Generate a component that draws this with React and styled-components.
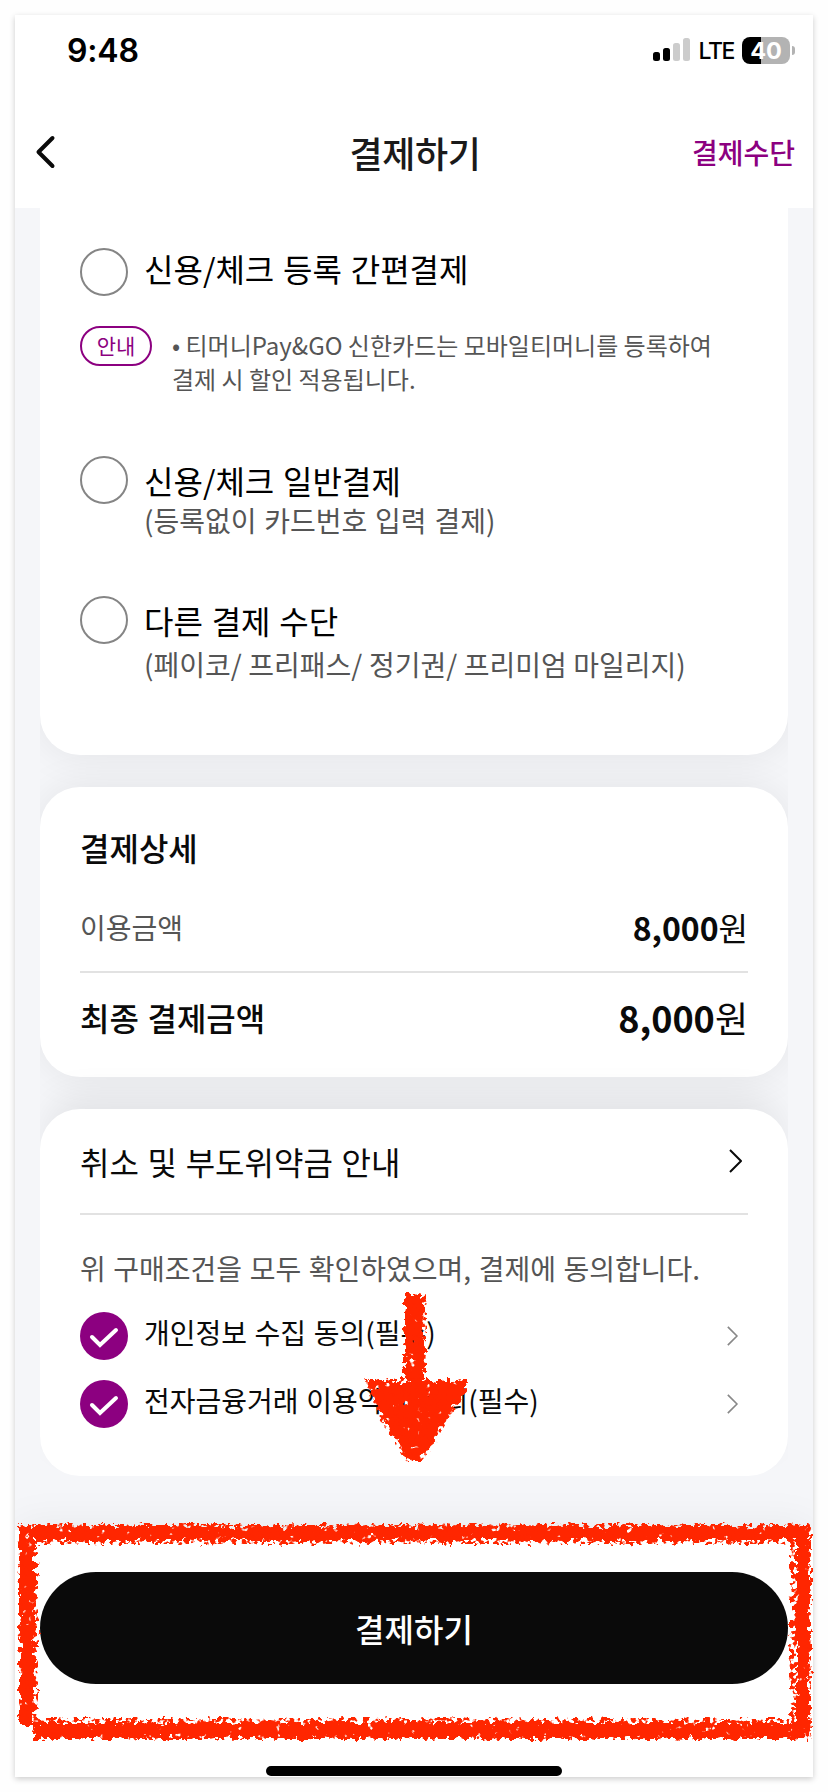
import React from 'react';
import styled, { createGlobalStyle } from 'styled-components';

const GlobalStyle = createGlobalStyle`
  * {
    box-sizing: border-box;
  }

  body {
    margin: 0;
    background: #fefefe;
    font-family: 'Noto Sans CJK KR', 'Noto Sans', sans-serif;
    color: #0a0a0a;
  }
`;

const Page = styled.div`
  position: relative;
  width: 828px;
  height: 1792px;
  padding: 15px;
  overflow: hidden;
`;

const Screen = styled.div`
  display: flex;
  flex-direction: column;
  width: 798px;
  height: 1762px;
  background: #fff;
  box-shadow: 0 2px 6px rgba(0, 0, 0, 0.2);
`;

const StatusBar = styled.div`
  display: flex;
  align-items: center;
  justify-content: space-between;
  height: 70px;
  padding: 0 18px 0 52px;
  color: #000;
  font-family: Inter, sans-serif;
`;

const Time = styled.span`
  font-size: 32px;
  font-weight: 600;
  letter-spacing: -0.2px;
`;

const StatusRight = styled.div`
  display: flex;
  align-items: center;
`;

const Network = styled.span`
  margin: 2px 8px 0 8px;
  font-size: 23px;
  font-weight: 500;
  letter-spacing: -1.4px;
`;

const Battery = styled.div`
  width: 48px;
  height: 27px;
  border-radius: 8px;
  background: linear-gradient(90deg, #000 40%, #b3b3b3 40%);
  color: #fff;
  font-size: 23.5px;
  font-weight: 700;
  line-height: 27px;
  text-align: center;
`;

const BatteryTip = styled.div`
  width: 3px;
  height: 9px;
  margin-left: 2px;
  border-radius: 0 4px 4px 0;
  background: #b3b3b3;
`;

const Header = styled.header`
  display: grid;
  grid-template-columns: 1fr auto 1fr;
  align-items: center;
  height: 123px;
  padding: 11px 18px 0 20px;
`;

const Title = styled.h1`
  margin: 0;
  font-size: 36px;
  font-weight: 500;
  line-height: 52px;
  letter-spacing: -0.4px;
  color: #1a1a1a;
`;

const HeaderLink = styled.span`
  justify-self: end;
  font-size: 28px;
  font-weight: 500;
  line-height: 40px;
  color: #8c0080;
`;

const Body = styled.main`
  height: 1322px;
  padding: 0 25px;
  background: #f5f6f9;
`;

const CardList = styled.div`
  display: flex;
  flex-direction: column;
  gap: 32px;
  height: 1268px;
  overflow: hidden;
`;

// the last card only throws its shadow upwards
const Card = styled.section`
  flex: none;
  height: ${(props) => props.$height}px;
  padding: ${(props) => props.$top}px 40px 0;
  border-radius: ${(props) => (props.$cut ? '0 0 40px 40px' : '40px')};
  background: #fff;
  box-shadow: ${(props) => (props.$last ? '0 -20px 36px -8px' : '0 0 40px')} rgba(10, 14, 0, 0.08);
`;

const Option = styled.div`
  display: flex;
  align-items: flex-start;
  gap: 16px;
  height: ${(props) => props.$height}px;
`;

const Radio = styled.span`
  flex: none;
  width: 48px;
  height: 48px;
  border: 2px solid #858585;
  border-radius: 50%;
`;

const OptionText = styled.div`
  padding-top: ${(props) => props.$top}px;
`;

const OptionName = styled.div`
  font-size: 32px;
  line-height: 40px;
  word-spacing: 1.6px;
  color: #000;
`;

const OptionSub = styled.div`
  margin-top: ${(props) => props.$gap}px;
  font-size: 28px;
  line-height: 40px;
  word-spacing: ${(props) => props.$space}px;
  color: #555;
`;

const Notice = styled.div`
  display: flex;
  align-items: flex-start;
  gap: 20px;
  height: 130px;
`;

const NoticeTag = styled.span`
  width: 72px;
  height: 40px;
  border: 2px solid #8c0080;
  border-radius: 20px;
  font-size: 21px;
  line-height: 35px;
  text-align: center;
  color: #8c0080;
`;

const NoticeText = styled.p`
  margin: 2px 0 0;
  font-size: 24px;
  line-height: 34px;
  white-space: nowrap;
  color: #555;
`;

const CardTitle = styled.h2`
  margin: 0;
  font-size: 32px;
  font-weight: 500;
  line-height: 46px;
`;

const PriceRow = styled.div`
  display: flex;
  align-items: center;
  justify-content: space-between;
  height: ${(props) => props.$height}px;
  padding-top: ${(props) => props.$top || 0}px;
`;

const PriceLabel = styled.span`
  font-size: ${(props) => (props.$total ? 32 : 28)}px;
  font-weight: ${(props) => (props.$total ? 500 : 400)};
  line-height: 46px;
  word-spacing: 1.4px;
  color: ${(props) => (props.$total ? '#0a0a0a' : '#555')};
`;

const Price = styled.span`
  font-size: ${(props) => (props.$total ? 36 : 32)}px;
  line-height: 46px;

  b {
    font-weight: 700;
  }
`;

const Divider = styled.div`
  height: 2px;
  background: #e2e2e2;
`;

const LinkRow = styled.div`
  display: flex;
  align-items: center;
  justify-content: space-between;
  height: 104px;
  padding-right: 6px;
  font-size: 32px;
  word-spacing: 1.5px;
`;

const Agreement = styled.p`
  margin: 32px 0 23px;
  font-size: 28px;
  line-height: 42px;
  word-spacing: 1.3px;
  color: #555;
`;

const CheckRow = styled.div`
  display: flex;
  align-items: center;
  height: 48px;
  margin-bottom: 20px;
  padding-right: 10px;
`;

const CheckLabel = styled.span`
  flex: 1;
  padding-left: 16px;
  font-size: 28px;
  line-height: 40px;
  margin-top: -9px;
  word-spacing: 1.3px;
`;

const Sheet = styled.footer`
  position: relative;
  display: flex;
  flex-direction: column;
  align-items: center;
  height: 247px;
  padding: 42px 25px 0;
  background: #fff;
  box-shadow: 0 -6px 40px rgba(0, 0, 0, 0.06);
  clip-path: inset(-60px 0 0 0);
`;

const PayButton = styled.button`
  width: 748px;
  height: 112px;
  padding: 0 0 1px;
  border: 0;
  border-radius: 56px;
  background: #0a0a0a;
  color: #fff;
  font-family: inherit;
  font-size: 32px;
  font-weight: 500;
`;

const HomeIndicator = styled.div`
  width: 296px;
  height: 10px;
  margin-top: 82px;
  border-radius: 5px;
  background: #000;
`;

const Marker = styled.svg`
  position: absolute;
  top: 0;
  left: 0;
  pointer-events: none;
`;

const Signal = () => (
  <svg width="37" height="24" viewBox="0 0 37 24">
    <rect x="0" y="14" width="7" height="9" rx="2.5" />
    <rect x="10" y="10" width="7" height="13" rx="2.5" />
    <rect x="20" y="5" width="7" height="18" rx="2.5" fill="#ccc" />
    <rect x="30" y="0" width="7" height="23" rx="2.5" fill="#ccc" />
  </svg>
);

const BackIcon = () => (
  <svg width="22" height="34" viewBox="0 0 22 34" fill="none" stroke="#0a0a0a" strokeWidth="4">
    <path d="M17.5 3 3.5 17 17.5 31" strokeLinejoin="round" strokeLinecap="round" />
  </svg>
);

const Chevron = ({ size, color }) => (
  <svg width={size * 0.55} height={size} viewBox="0 0 13.2 24" fill="none" stroke={color} strokeWidth="2">
    <path d="M1 1 12 12 1 23" strokeLinejoin="round" />
  </svg>
);

const CheckIcon = () => (
  <svg width="48" height="48" viewBox="0 0 48 48">
    <circle cx="24" cy="24" r="24" fill="#8c0080" />
    <path d="M12 25 20 33 36 18" fill="none" stroke="#fff" strokeWidth="4" strokeLinecap="round" />
  </svg>
);

// hand drawn crayon marks: a solid core plus a grainy edge
const Crayon = () => (
  <Marker width="828" height="1792" viewBox="0 0 828 1792">
    <defs>
      <filter id="core" filterUnits="userSpaceOnUse" x="0" y="1270" width="828" height="500" colorInterpolationFilters="sRGB">
        <feTurbulence type="fractalNoise" baseFrequency="0.16" numOctaves="2" seed="4" result="n" />
        <feDisplacementMap in="SourceGraphic" in2="n" scale="12" xChannelSelector="R" yChannelSelector="G" result="d" />
        <feTurbulence type="fractalNoise" baseFrequency="0.12" numOctaves="2" seed="11" />
        <feColorMatrix values="0 0 0 0 0  0 0 0 0 0  0 0 0 0 0  12 0 0 0 -2.8" result="holes" />
        <feComposite in="d" in2="holes" operator="in" />
      </filter>
      <filter id="grain" filterUnits="userSpaceOnUse" x="0" y="1270" width="828" height="500" colorInterpolationFilters="sRGB">
        <feTurbulence type="fractalNoise" baseFrequency="0.18" numOctaves="2" seed="7" result="n" />
        <feDisplacementMap in="SourceGraphic" in2="n" scale="9" xChannelSelector="R" yChannelSelector="G" result="d" />
        <feTurbulence type="fractalNoise" baseFrequency="0.19" numOctaves="2" seed="2" />
        <feColorMatrix values="0 0 0 0 0  0 0 0 0 0  0 0 0 0 0  12 0 0 0 -5.6" result="holes" />
        <feComposite in="d" in2="holes" operator="in" />
      </filter>
    </defs>
    <g fill="#ff2600" filter="url(#core)">
      <path d="M20 1526H809V1540H20Z" />
      <path d="M20 1526H34V1726H20Z" />
      <path d="M35 1723H809V1738H35Z" />
      <path d="M796 1526H809V1738H796Z" />
      <path d="M405 1295H423V1380H405Z" />
      <path d="M367 1381H465V1391L454 1405 422 1456 414 1461 407 1456 379 1409Z" />
    </g>
    <g fill="#ff2600" filter="url(#grain)">
      <path d="M19 1524H811V1544H19Z" />
      <path d="M19 1524H38V1722H19Z" />
      <path d="M33 1718H811V1739H33Z" />
      <path d="M790 1524H811V1739H790Z" />
      <path d="M405 1294H426V1382H405Z" />
      <path d="M363 1379H467V1391L455 1409 423 1461H406L377 1411Z" />
    </g>
  </Marker>
);

const terms = ['개인정보 수집 동의(필수)', '전자금융거래 이용약관 동의(필수)'];

const App = () => {
  const termRows = terms.map((term, i) => (
    <CheckRow key={i}>
      <CheckIcon />
      <CheckLabel>{term}</CheckLabel>
      <Chevron size={20} color="#888" />
    </CheckRow>
  ));

  return (
    <Page>
      <GlobalStyle />
      <Screen>
        <StatusBar>
          <Time>9:48</Time>
          <StatusRight>
            <Signal />
            <Network>LTE</Network>
            <Battery>40</Battery>
            <BatteryTip />
          </StatusRight>
        </StatusBar>

        <Header>
          <BackIcon />
          <Title>결제하기</Title>
          <HeaderLink>결제수단</HeaderLink>
        </Header>

        <Body>
          <CardList>
            <Card $cut $height={547} $top={40}>
              <Option $height={78}>
                <Radio />
                <OptionText $top={0}>
                  <OptionName>신용/체크 등록 간편결제</OptionName>
                </OptionText>
              </Option>
              <Notice>
                <NoticeTag>안내</NoticeTag>
                <NoticeText>
                  • 티머니Pay&amp;GO 신한카드는 모바일티머니를 등록하여
                  <br />
                  결제 시 할인 적용됩니다.
                </NoticeText>
              </Notice>
              <Option $height={140}>
                <Radio />
                <OptionText $top={4}>
                  <OptionName>신용/체크 일반결제</OptionName>
                  <OptionSub $gap={0} $space={1.5}>(등록없이 카드번호 입력 결제)</OptionSub>
                </OptionText>
              </Option>
              <Option $height={100}>
                <Radio />
                <OptionText $top={4}>
                  <OptionName>다른 결제 수단</OptionName>
                  <OptionSub $gap={4} $space={0.3}>(페이코/ 프리패스/ 정기권/ 프리미엄 마일리지)</OptionSub>
                </OptionText>
              </Option>
            </Card>

            <Card $height={290} $top={37}>
              <CardTitle>결제상세</CardTitle>
              <PriceRow $height={101} $top={13}>
                <PriceLabel>이용금액</PriceLabel>
                <Price>
                  <b>8,000</b>원
                </Price>
              </PriceRow>
              <Divider />
              <PriceRow $height={88}>
                <PriceLabel $total>최종 결제금액</PriceLabel>
                <Price $total>
                  <b>8,000</b>원
                </Price>
              </PriceRow>
            </Card>

            <Card $last $height={367} $top={0}>
              <LinkRow>
                취소 및 부도위약금 안내
                <Chevron size={24} color="#0a0a0a" />
              </LinkRow>
              <Divider />
              <Agreement>위 구매조건을 모두 확인하였으며, 결제에 동의합니다.</Agreement>
              {termRows}
            </Card>
          </CardList>
        </Body>

        <Sheet>
          <PayButton>결제하기</PayButton>
          <HomeIndicator />
        </Sheet>
      </Screen>
      <Crayon />
    </Page>
  );
};

export default App;
